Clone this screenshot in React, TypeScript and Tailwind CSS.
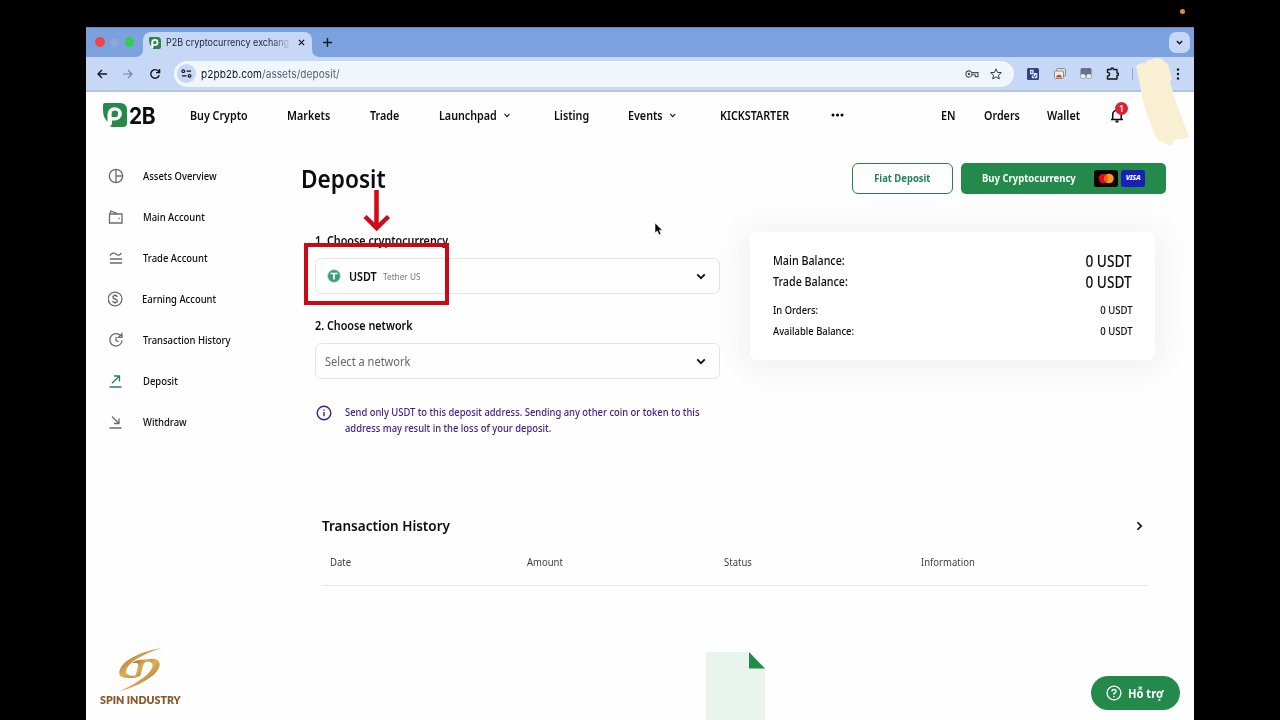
import type { ReactNode } from "react";

function Chevron({ className = "", w = 2 }: { className?: string; w?: number }) {
  return (
    <svg viewBox="0 0 12 8" className={className} fill="none" stroke="currentColor" strokeWidth={w}>
      <path d="M1.5 1.5 6 6l4.5-4.5" />
    </svg>
  );
}

function P2BMark({ className = "" }: { className?: string }) {
  return (
    <svg viewBox="0 0 24 24" className={className}>
      <path d="M2 0H17Q24 0 24 7V20Q24 24 20 24H9Q5.500 23.500 5 19Q0 15 0 7V2Q0 0 2 0Z" fill="#26894b" />
      <path
        d="M4.500 21.500V11A7.200 6.700 0 1 1 11.800 17.600H9V19.500Q9 22 7.500 22.800Q5 23.500 4.500 21.500Z"
        fill="#fff"
      />
      <path d="M8.600 14V11a3.300 3.300 0 1 1 3.300 3.200z" fill="#26894b" />
    </svg>
  );
}

function Browser() {
  return (
    <div className="font-['Inter',sans-serif]">
      <div className="flex h-[30px] items-end border-t border-[#6688bd] bg-[#7ca1df]">
        <div className="flex h-[30px] w-[57px] items-center gap-[5.5px] pl-[9px]">
          <i className="size-[9.5px] rounded-full bg-[#ed4648]" />
          <i className="size-[9px] rounded-full bg-[#8da7d6]" />
          <i className="size-[9.5px] rounded-full bg-[#35ce4a]" />
        </div>
        <div className="relative flex h-[25px] w-[169px] items-center rounded-t-[8px] bg-[#c6d8f5] pb-[4px] pl-[6px]">
          <svg viewBox="0 0 8 8" className="absolute -left-[8px] bottom-0 size-[8px]"><path d="M8 0V8H0Q8 8 8 0" fill="#c6d8f5" /></svg>
          <svg viewBox="0 0 8 8" className="absolute -right-[8px] bottom-0 size-[8px]"><path d="M0 0V8H8Q0 8 0 0" fill="#c6d8f5" /></svg>
          <P2BMark className="size-[12px] shrink-0" />
          <div className="ml-[5px] flex w-[123px]">
            <span className="origin-left scale-x-[0.925] whitespace-nowrap bg-linear-to-r from-[#1c2230] from-85% to-[#b4c5e2] bg-clip-text text-[9.7px] leading-[14px] text-transparent">P2B cryptocurrency exchang</span>
          </div>
          <svg viewBox="0 0 8 8" className="ml-[9px] size-[7px] shrink-0" stroke="#15181f" strokeWidth="1.5"><path d="M1 1l6 6M7 1 1 7" /></svg>
        </div>
        <svg viewBox="0 0 8 8" className="mb-[10px] ml-[11px] size-[9px]" stroke="#15181f" strokeWidth="1.2"><path d="M4 0v8M0 4h8" /></svg>
        <div className="mb-[4px] ml-auto mr-[4px] flex size-[21px] items-center justify-center rounded-[7px] bg-[#c6d8f5] text-[#111]">
          <Chevron className="h-[5px] w-[7px]" w={2.4} />
        </div>
      </div>
      <div className="flex h-[35px] items-center border-b-2 border-[#b6c5de] bg-[#c6d8f5] text-[#12151c]">
        <svg viewBox="0 0 10 10" className="ml-[11px] size-[10px]" fill="none" stroke="currentColor" strokeWidth="1.3"><path d="M10 5H1M5 1 1 5l4 4" /></svg>
        <svg viewBox="0 0 10 10" className="ml-[16px] size-[10px] text-[#7386a5]" fill="none" stroke="currentColor" strokeWidth="1.2"><path d="M0 5h9M5 1l4 4-4 4" /></svg>
        <svg viewBox="0 0 12 12" className="ml-[16px] size-[12px]" fill="none" stroke="currentColor" strokeWidth="1.4"><path d="M10.2 7.2A4.3 4.3 0 1 1 9.3 3L10.5 4.3M10.6 1v3.6H7" /></svg>
        <div className="ml-[13px] flex h-[26px] w-[840px] items-center rounded-full bg-[#f1f6fd]">
          <div className="ml-[3px] flex size-[19px] items-center justify-center rounded-full bg-[#c6d8f5]">
            <svg viewBox="0 0 12 10" className="h-[9px] w-[11px]" fill="none" stroke="currentColor" strokeWidth="1.3"><circle cx="2.4" cy="2.4" r="1.5" /><path d="M6 2.4h5M1 7.6h5" /><circle cx="9.4" cy="7.6" r="1.5" /></svg>
          </div>
          <span className="ml-[4.500px] mt-px origin-left scale-x-[0.918] text-[11px] leading-[16px] tracking-[0.04px] text-[#14171e]">p2pb2b.com<span className="text-[#596170]">/assets/deposit/</span></span>
          <svg viewBox="0 0 14 8" className="ml-auto h-[8px] w-[14px]" fill="none" stroke="#4a505c" strokeWidth="1.1"><circle cx="4" cy="4" r="3.1" /><circle cx="4" cy="4" r=".7" fill="#4a505c" /><path d="M7 2.600h6v4h-2.800V4.800H7" /></svg>
          <svg viewBox="0 0 12 12" className="ml-[11px] mr-[12px] size-[12px]" fill="none" stroke="#333944" strokeWidth="1"><path d="M6 .9 7.500 4.400l3.800.3-2.900 2.500.9 3.700L6 8.900l-3.300 2 .9-3.700L.7 4.700l3.800-.3z" /></svg>
        </div>
        <svg viewBox="0 0 12 12" className="ml-[13px] size-[12px]"><rect width="12" height="12" rx="1.500" fill="#2b4482" /><path d="M3 1.800h3.600v4.400H3zM6.800 5h3.500v5.300H4.800V7.500h2z" fill="#dbe5f8" /><path d="M4.800 3v2M6.300 8.300l1.300 1 1.500-2.500" fill="none" stroke="#2b4482" /></svg>
        <svg viewBox="0 0 12 11" className="ml-[15px] h-[11px] w-[12px]"><rect x="2.500" y=".5" width="9" height="7.500" rx="1" fill="#e2e1dd" stroke="#878b91" /><rect x=".5" y="3" width="9" height="7.500" rx="1" fill="#efede8" stroke="#8b8e94" /><path d="M2.200 9.500a2.800 2.800 0 0 1 5.600 0Z" fill="#c64a3f" /></svg>
        <svg viewBox="0 0 12 12" className="ml-[14px] size-[12px]"><rect x=".5" width="11" height="8" rx="1.500" fill="#687081" /><rect x=".5" y="6" width="5" height="4.500" rx="1.500" fill="#e9eef7" stroke="#828996" strokeWidth=".6" /><rect x="6.500" y="6" width="5" height="4.500" rx="1.500" fill="#e9eef7" stroke="#828996" strokeWidth=".6" /></svg>
        <svg viewBox="0 0 13 13" className="ml-[14px] size-[13px]" fill="none" stroke="currentColor" strokeWidth="1.400" strokeLinejoin="round"><path d="M1.500 2.500H5Q5 1 6.200 1t1.200 1.500H11V6q1.500 0 1.500 1.200T11 8.400V12H1.500V9Q3.500 9 3.500 7.200T1.500 5.400Z" /></svg>
        <i className="ml-[13px] h-[12px] w-px bg-[#88a9d9]" />
        <svg viewBox="0 0 4 12" className="ml-[43px] h-[12px] w-[4px]" fill="currentColor"><circle cx="2" cy="1.500" r="1.200" /><circle cx="2" cy="6" r="1.200" /><circle cx="2" cy="10.500" r="1.200" /></svg>
      </div>
    </div>
  );
}

function NavItem({ children, menu }: { children: ReactNode; menu?: boolean }) {
  return (
    <span className="flex origin-left scale-x-[0.895] items-center gap-[7px]">
      {children}
      {menu && <Chevron className="h-[5px] w-[8px]" w={1.8} />}
    </span>
  );
}

function Header() {
  return (
    <header className="flex h-[47px] items-center whitespace-nowrap pl-[17px] text-[12px] font-semibold">
      <div className="flex w-[87px] items-center pb-px">
        <P2BMark className="size-[24px]" />
        <span className="ml-[2px] mt-[2px] origin-left scale-x-[0.89] font-['Inter',sans-serif] text-[23.500px] font-bold leading-[24px] tracking-[-0.500px]">2B</span>
      </div>
      <nav className="grid grow grid-cols-[97px_83px_69px_115px_74px_92px_111px_110px_43px_63px_63px_30px] items-center">
        <NavItem>Buy Crypto</NavItem>
        <NavItem>Markets</NavItem>
        <NavItem>Trade</NavItem>
        <NavItem menu>Launchpad</NavItem>
        <NavItem>Listing</NavItem>
        <NavItem menu>Events</NavItem>
        <NavItem>KICKSTARTER</NavItem>
        <svg viewBox="0 0 13 4" className="-mt-px h-[4px] w-[13px]"><circle cx="2" cy="2" r="1.500" /><circle cx="6.500" cy="2" r="1.500" /><circle cx="11" cy="2" r="1.500" /></svg>
        <NavItem>EN</NavItem>
        <NavItem>Orders</NavItem>
        <NavItem>Wallet</NavItem>
        <span className="relative">
          <svg viewBox="0 0 14 15" className="h-[15px] w-[14px]" fill="none" stroke="currentColor" strokeWidth="1.500"><path d="M1 11.500h12M2.700 11V6.500a4.200 4.200 0 0 1 8.500 0V11" /><path d="M5.500 13.500h3" strokeWidth="2" /></svg>
          <b className="absolute -top-[6px] left-[5px] flex size-[13px] items-center justify-center rounded-full bg-[#d52536] text-[9px] font-medium text-white">1</b>
        </span>
      </nav>
    </header>
  );
}

const items: { label: string; icon: ReactNode; active?: boolean }[] = [
  { label: "Assets Overview", icon: <><circle cx="8" cy="8" r="6.700" /><path d="M8 1.300v13.400M8 8h6.700" /></> },
  { label: "Main Account", icon: <><path d="M1.500 5h12.500v9H1.500zM2 5l.8-3L10 4.800" /><path d="M10.500 9.500h1.200" strokeWidth="1.500" /></> },
  { label: "Trade Account", icon: <path d="M2 5.500Q5 1.500 8 4t5.500-.8M2 9h12M2 13h12" /> },
  { label: "Earning Account", icon: <g transform="translate(-.900 0)"><circle cx="8" cy="8" r="6.900" /><path d="M10.300 6Q10 4.500 8 4.500T5.700 6q0 1.500 2.300 2t2.300 2q0 1.500-2.300 1.500T5.700 10M8 3.300v1.200M8 11.500v1.200" /></g> },
  { label: "Transaction History", icon: <><path d="M12.300 3.300A6.200 6.200 0 1 0 14.200 8.500" /><path d="M14 1.800v3.500h-3.500zM8 5v3.500l2.500 1.200" /></> },
  { label: "Deposit", icon: <path d="M4 10.300 11.500 3M6 3h5.500v5.500M1.500 14h12" />, active: true },
  { label: "Withdraw", icon: <path d="M4 2.500 11 9.500M11 4.500v5H6M1.500 14h12" /> },
];

function Sidebar() {
  return (
    <aside className="w-[215px] pt-[17px] text-[10.700px] font-medium">
      {items.map((it) => (
        <div key={it.label} className="flex h-[41px] items-center pl-[22px]">
          <svg viewBox="0 0 16 16" className={it.active ? "-mt-px size-[16px] text-[#26805a]" : "-mt-px size-[16px] text-[#6b6b70]"} fill="none" stroke="currentColor" strokeWidth="1.300">{it.icon}</svg>
          <span className={it.label === "Earning Account" ? "ml-[17.500px] origin-left scale-x-[0.885]" : "ml-[19px] origin-left scale-x-[0.885]"}>{it.label}</span>
        </div>
      ))}
    </aside>
  );
}

function Balance({ label, value, big }: { label: string; value: string; big?: boolean }) {
  return (
    <div className={big ? "flex h-[21px] items-center justify-between text-[12px] font-medium" : "flex h-[20.500px] items-center justify-between text-[10.500px] font-medium"}>
      <span className="origin-left scale-x-[0.895]">{label}</span>
      <span className={big ? "origin-right scale-x-[0.895] text-[15.300px]" : "origin-right scale-x-[0.91]"}>{value}</span>
    </div>
  );
}

function Select({ children }: { children: ReactNode }) {
  return (
    <div className="flex h-[36px] w-[405.400px] items-center rounded-[6px] border border-[#e4e4e7] pl-[9px] pr-[13px]">
      {children}
      <Chevron className="ml-auto h-[7px] w-[10px]" w={2.1} />
    </div>
  );
}

function Main() {
  return (
    <main className="w-[893px] whitespace-nowrap">
      <div className="flex h-[79px] pt-[24px]">
        <h1 className="-mt-[3px] h-[36px] w-[551px] origin-left scale-x-[0.905] text-[25px] font-semibold leading-[36px]">Deposit</h1>
        <button className="flex h-[31px] w-[101px] items-center justify-center rounded-[6px] border-[1.500px] border-[#2c7c5a] text-[10.500px] font-bold text-[#26805a]"><span className="scale-x-[0.9]">Fiat Deposit</span></button>
        <button className="ml-[8px] flex h-[31px] w-[205px] items-center rounded-[5px] bg-[#238a4b] pl-[21px] text-[10.500px] font-bold text-white">
          <span className="w-[112px] origin-left scale-x-[0.905] text-left">Buy Cryptocurrency</span>
          <svg viewBox="0 0 24 17" className="h-[17px] w-[24px]"><rect width="24" height="17" rx="2.500" fill="#060505" /><circle cx="9.500" cy="8.500" r="4.800" fill="#e20a17" /><circle cx="15" cy="8.500" r="4.800" fill="#f79a1d" /><path d="M12.250 4.600a4.800 4.800 0 0 1 0 7.800 4.800 4.800 0 0 1 0-7.800" fill="#f35e14" /></svg>
          <span className="ml-[3px] flex h-[17px] w-[24px] items-center justify-center rounded-[2.500px] bg-[#1a1fb8] text-[7px] font-extrabold italic tracking-[-0.200px]">VISA</span>
        </button>
      </div>
      <div className="flex pl-[14px]">
        <section className="w-[434.600px] pt-[14px]">
          <h2 className="h-[18px] origin-left scale-x-[0.898] text-[12px] font-semibold leading-[17px]">1. Choose cryptocurrency</h2>
          <div className="mt-[8px]">
            <Select>
              <svg viewBox="0 0 14 14" className="ml-[2px] size-[14px]"><circle cx="7" cy="7" r="6.500" fill="#3d9e7c" stroke="#cde8df" /><path d="M3.500 4.500h7M7 4.500v6" stroke="#fff" strokeWidth="1.700" /></svg>
              <span className="ml-[8px] mt-px w-[33.500px] origin-left scale-x-[0.9] text-[12px] font-semibold">USDT</span>
              <span className="mt-[2px] origin-left scale-x-[0.915] text-[9px] text-[#77777d]">Tether US</span>
            </Select>
          </div>
          <h2 className="mt-[23px] h-[18px] origin-left scale-x-[0.898] text-[12px] font-semibold leading-[17px]">2. Choose network</h2>
          <div className="mt-[8px]">
            <Select><span className="mt-px origin-left scale-x-[0.92] text-[12px] text-[#66666c]">Select a network</span></Select>
          </div>
          <div className="mt-[26px] flex text-[10.400px] font-medium leading-[15.500px] text-[#44208c]">
            <svg viewBox="0 0 16 16" className="ml-px mr-[12.500px] size-[16px] shrink-0" fill="none" stroke="currentColor" strokeWidth="1.400"><circle cx="8" cy="8" r="6.800" /><path d="M8 7v4.200M8 4.500v1.300" /></svg>
            <p className="origin-left scale-x-[0.904]">Send only USDT to this deposit address. Sending any other coin or token to this<br />address may result in the loss of your deposit.</p>
          </div>
        </section>
        <section className="mt-[14px] h-[128px] w-[405.500px] rounded-[6px] bg-white pl-[23.500px] pr-[23px] pt-[18.500px] shadow-[0_3px_34px_8px_rgba(0,0,0,0.055)]">
          <Balance label="Main Balance:" value="0 USDT" big />
          <Balance label="Trade Balance:" value="0 USDT" big />
          <div className="h-[8.500px]" />
          <Balance label="In Orders:" value="0 USDT" />
          <Balance label="Available Balance:" value="0 USDT" />
        </section>
      </div>
      <section className="ml-[21px] mt-[77px] w-[826px]">
        <div className="flex h-[24px] items-center justify-between text-[15px] font-semibold">
          <span className="origin-left scale-x-[0.9]">Transaction History</span>
          <svg viewBox="0 0 8 12" className="mr-[5px] mt-px h-[10px] w-[7px]" fill="none" stroke="currentColor" strokeWidth="2.100"><path d="m1.500 1.500 4.500 4.500-4.500 4.500" /></svg>
        </div>
        <div className="grid h-[49px] grid-cols-[repeat(4,197px)] items-center border-b border-[#e4e5e6] pl-[8px] pt-[3px] text-[10.500px] text-[#3c3d46]">
          {["Date", "Amount", "Status", "Information"].map((c) => (
            <span key={c} className="origin-left scale-x-[0.905]">{c}</span>
          ))}
        </div>
        <svg viewBox="0 0 59 70" className="ml-[384px] mt-[66px] h-[70px] w-[59px]"><path d="M0 0h43l16 16v54H0z" fill="#e8f4ed" /><path d="M43 0v16.500h16z" fill="#238a4b" /></svg>
      </section>
    </main>
  );
}

function SpinIndustry() {
  return (
    <div className="absolute left-[98px] top-[647px] flex w-[84px] flex-col items-center">
      <svg viewBox="96 36 136 136" className="h-[45px] w-[45px]">
        <defs><linearGradient id="gold" x1="0" y1="0" x2="1" y2="1"><stop offset="0" stopColor="#8f6128" /><stop offset=".5" stopColor="#dcae55" /><stop offset="1" stopColor="#8b612b" /></linearGradient></defs>
        <g fill="url(#gold)">
          <path d="M230 38Q158 50 120 80Q96 102 100 118Q107 134 150 128L164 122Q130 126 121 115Q116 101 142 79Q174 56 230 38Z" />
          <path d="M162 81Q204 64 219 78Q229 94 205 119Q170 150 98 171Q160 142 185 118Q206 96 199 86Q190 76 162 81Z" />
          <path d="M138 84Q155 72 186 74L182 81Q176 81 172 92L163 124L142 129Q150 122 152 112L157 93Q159 84 150 84Z" />
        </g>
      </svg>
      <span className="scale-x-[0.89] whitespace-nowrap font-['Lato',sans-serif] text-[12px] font-extrabold leading-[16px] text-[#87592a]">SPIN INDUSTRY</span>
    </div>
  );
}

export default function App() {
  return (
    <div className="relative h-[720px] w-[1280px] overflow-hidden bg-black pt-[27px] font-['Noto_Sans',sans-serif] text-[#0b0b10]">
      <div className="mx-[86px] h-[693px] overflow-hidden bg-[#fefefe]">
        <Browser />
        <Header />
        <div className="flex"><Sidebar /><Main /></div>
      </div>

      <i className="absolute left-[1180px] top-[9px] size-[5px] rounded-full bg-[#e0912f]" />
      <svg viewBox="0 0 56 90" className="absolute left-[1135px] top-[57px] h-[90px] w-[56px]">
        <path d="M1 9Q7 5 11 6Q12 2 16 3L20 1L27 2L30 5L33 7L37 22L35 25L42 48L54 80Q45 83 41 82L36 88Q30 88 28 84Q24 86 21 80L12 58Q7 42 5 28Z" fill="#f9efd2" />
      </svg>
      <div className="absolute left-[304px] top-[243px] h-[62px] w-[145.400px] border-4 border-[#cb0815]" />
      <svg viewBox="0 0 28 42" className="absolute left-[363px] top-[190px] h-[42px] w-[28px]" fill="none" stroke="#d10a17" strokeWidth="4.500"><path d="M13.500 0v38M2 26.500 13.700 38 25.500 26.500" /></svg>
      <svg viewBox="0 0 10 14" className="absolute left-[653.500px] top-[221.500px] h-[14px] w-[10px]" fill="#08080a" stroke="#fff" strokeWidth=".6"><path d="M1 1v10l2.300-2.100L5 12.800l2-.9-1.700-3.700h3.200z" /></svg>
      <SpinIndustry />
      <button className="absolute left-[1091px] top-[676px] flex h-[34px] w-[88.500px] items-center rounded-full bg-[#238a4b] pl-[15px] text-[11.700px] font-bold text-white">
        <svg viewBox="0 0 16 16" className="mr-[5.500px] size-[16px]" fill="none" stroke="currentColor" strokeWidth="1.400"><circle cx="8" cy="8" r="6.900" /><path d="M6 6.500Q6 4.500 8 4.500t2 1.900Q10 7.500 8 8.500V9.700M8 11v1.300" /></svg>
        <span className="mt-px origin-left scale-x-[0.95] whitespace-nowrap">Hỗ trợ</span>
      </button>
    </div>
  );
}
